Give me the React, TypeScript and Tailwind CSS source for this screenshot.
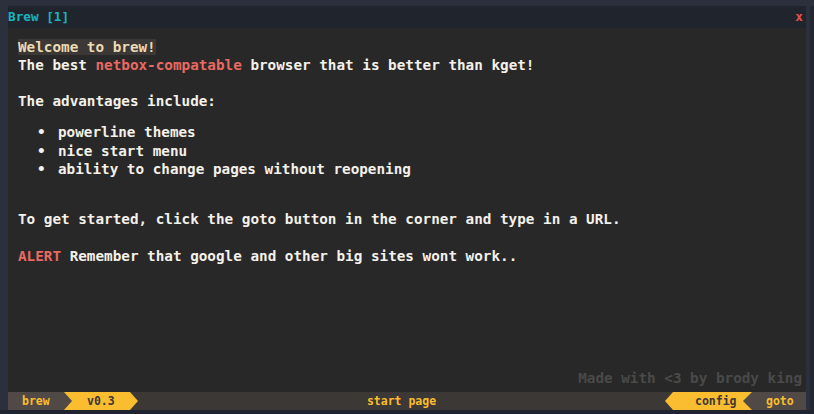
import React from "react";

const mono = { fontFamily: '"DejaVu Sans Mono", "Liberation Mono", monospace' };

export default function App() {
  return (
    <div
      className="w-[814px] h-[414px] bg-[#2b303c] flex flex-col overflow-hidden"
      style={mono}
    >
      <div className="h-[6px] shrink-0" />
      <div className="flex flex-1 min-h-0">
        <div className="w-[8px] shrink-0" />
        <div className="flex-1 flex flex-col min-w-0">
          {/* title bar */}
          <div className="h-[22px] shrink-0 bg-[#20252d] flex items-center justify-between px-0 text-[12.7px] font-bold">
            <span className="text-[#1bb3bf]">Brew [1]</span>
            <span className="text-[#e5534b] mr-[3px]">x</span>
          </div>
          {/* content */}
          <div className="flex-1 bg-[#282828] flex flex-col pl-[10px] pt-[10px] pr-[4px] text-[14.3px] font-bold leading-[18px] text-[#f4f1ea] min-h-0">
            <div>
              <span className="bg-[#3c3836] text-[#ebdbb2]">Welcome to brew!</span>
            </div>
            <div>
              The best <span className="text-[#ea6962]">netbox-compatable</span> browser that is better than kget!
            </div>
            <div className="mt-[18px]">The advantages include:</div>
            <div className="mt-[13px] flex flex-col leading-[18.5px]">
              {["powerline themes", "nice start menu", "ability to change pages without reopening"].map((t) => (
                <div key={t} className="flex">
                  <span className="w-[40px] pl-[19px]">•</span>
                  <span>{t}</span>
                </div>
              ))}
            </div>
            <div className="mt-[31.5px]">
              To get started, click the goto button in the corner and type in a URL.
            </div>
            <div className="mt-[19px]">
              <span className="text-[#ea6962]">ALERT</span> Remember that google and other big sites wont work..
            </div>
            <div className="flex-1" />
            <div className="self-end text-[#4a4a48] mb-[5px]">Made with &lt;3 by brody king</div>
          </div>
          {/* status bar */}
          <div className="h-[18px] shrink-0 bg-[#3c3836] flex items-center text-[11.5px] font-bold relative">
            <div className="relative h-full w-[130px] shrink-0">
              <div className="absolute inset-0 bg-[#fabd2f] [clip-path:polygon(0_0,122px_0,130px_50%,122px_100%,0_100%)]" />
              <div className="absolute inset-0 bg-[#504945] [clip-path:polygon(0_0,56px_0,64px_50%,56px_100%,0_100%)]" />
              <span className="absolute left-[14px] top-0 leading-[18px] text-[#fabd2f]">brew</span>
              <span className="absolute left-[79px] top-0 leading-[18px] text-[#3c3836]">v0.3</span>
            </div>
            <div className="flex-1 text-center text-[#fabd2f] leading-[18px] pr-[0px]">start page</div>
            <div className="relative h-full w-[141px] shrink-0">
              <div className="absolute inset-0 bg-[#fabd2f] [clip-path:polygon(0_50%,8px_0,100%_0,100%_100%,8px_100%)]" />
              <div className="absolute inset-0 bg-[#504945] [clip-path:polygon(78px_50%,87px_0,100%_0,100%_100%,87px_100%)]" />
              <span className="absolute left-[30px] top-0 leading-[18px] text-[#3c3836]">config</span>
              <span className="absolute left-[101px] top-0 leading-[18px] text-[#fabd2f]">goto</span>
            </div>
          </div>
        </div>
        <div className="w-[4px] shrink-0" />
        <div className="w-[4px] shrink-0 bg-[#232732]" />
      </div>
      <div className="h-[4px] shrink-0 bg-[#1f2430]" />
    </div>
  );
}
